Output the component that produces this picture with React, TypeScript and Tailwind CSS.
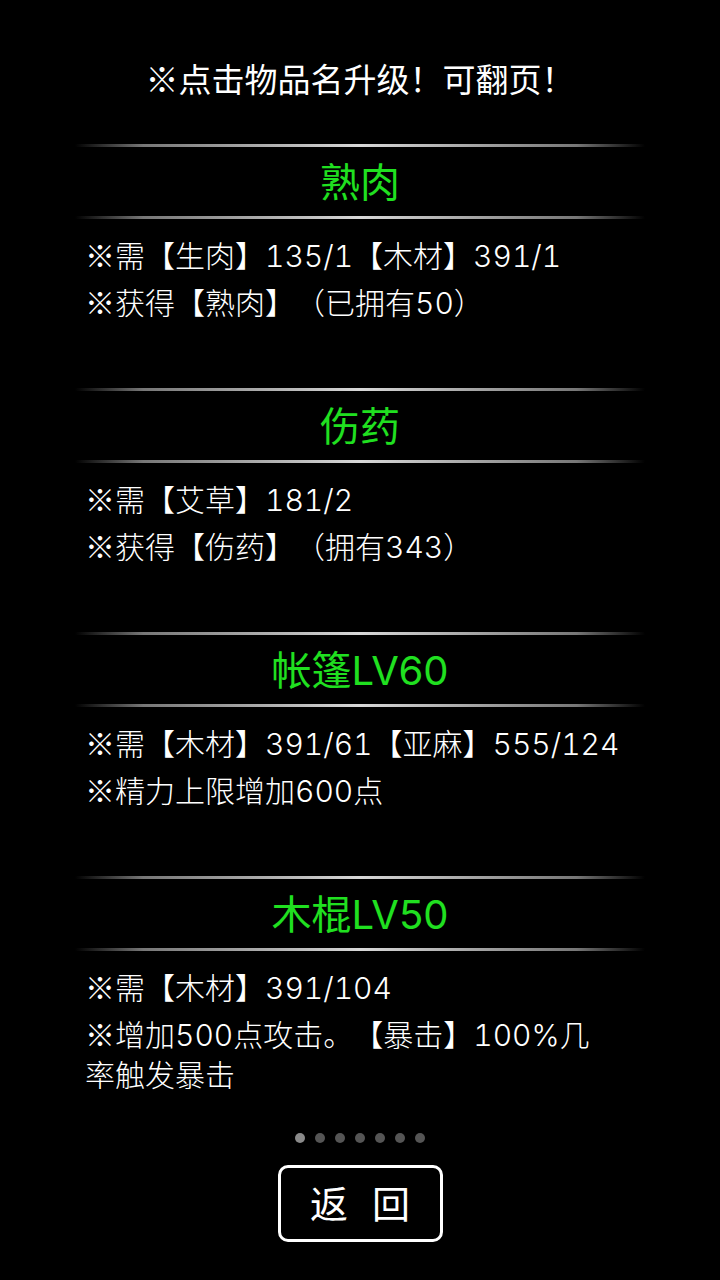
import React from 'react';

type Recipe = {
    title: string;
    lines: string[][];
};

// 每一行可以拆成多段（用于手动换行）
const recipes: Recipe[] = [
    {
        title: '熟肉',
        lines: [['※需【生肉】135/1【木材】391/1'], ['※获得【熟肉】（已拥有50）']],
    },
    {
        title: '伤药',
        lines: [['※需【艾草】181/2'], ['※获得【伤药】（拥有343）']],
    },
    {
        title: '帐篷LV60',
        lines: [['※需【木材】391/61【亚麻】555/124'], ['※精力上限增加600点']],
    },
    {
        title: '木棍LV50',
        lines: [['※需【木材】391/104'], ['※增加500点攻击。【暴击】100%几', '率触发暴击']],
    },
];

// ※ 用中文字体显示，Inter 里的 ※ 太小
const WithMark = ({ text }: { text: string }) => {
    const parts = text.split('※');
    return (
        <>
            {parts.map((p, i) => (
                <React.Fragment key={i}>
                    {i > 0 && <span className="font-['Noto_Sans_CJK_SC'] font-normal">※</span>}
                    {p}
                </React.Fragment>
            ))}
        </>
    );
};

// 分隔线：两端渐隐的灰白细线
const Divider = () => (
    <div className="h-[3px] w-full bg-[linear-gradient(to_right,transparent_0%,#777_12%,#d8d8d8_50%,#777_88%,transparent_100%)]" />
);

const RecipeCard = ({ recipe }: { recipe: Recipe }) => (
    <div className="h-[244px] mx-[75px]">
        <Divider />
        <div className="h-[69px] pt-[3px] flex items-center justify-center">
            <span className="text-[40px] leading-none text-[#20e020] cursor-pointer">{recipe.title}</span>
        </div>
        <Divider />
        <div className="pt-[15px] pl-[10px] flex flex-col gap-[5px] text-[30px] leading-[40px] text-white font-light tabular-nums">
            {recipe.lines.map((line, i) => (
                <div key={i}>
                    {line.map((seg, j) => (
                        <React.Fragment key={j}>
                            {j > 0 && <br />}
                            <WithMark text={seg} />
                        </React.Fragment>
                    ))}
                </div>
            ))}
        </div>
    </div>
);

export default function App() {
    return (
        <div
            className="w-[720px] h-[1280px] bg-black flex flex-col overflow-hidden [text-spacing-trim:space-all]"
            style={{ fontFamily: 'Inter, "Noto Sans CJK SC", sans-serif' }}
        >
            {/* 提示 */}
            <div className="h-[144px] pt-[58px] text-center text-[33px] leading-[40px] text-white">
                <WithMark text="※点击物品名升级！可翻页！" />
            </div>

            {/* 列表 */}
            {recipes.map((r) => (
                <RecipeCard key={r.title} recipe={r} />
            ))}

            {/* 分页点 */}
            <div className="mt-[13px] flex justify-center gap-[10px]">
                {[0, 1, 2, 3, 4, 5, 6].map((i) => (
                    <span
                        key={i}
                        className={`w-[10px] h-[10px] rounded-full ${i === 0 ? 'bg-[#8a8a8a]' : 'bg-[#555555]'}`}
                    />
                ))}
            </div>

            {/* 返回按钮 */}
            <div className="mt-[22px] flex justify-center">
                <button className="w-[165px] h-[77px] border-[3px] border-white rounded-[10px] text-white text-[38px] leading-none flex items-center justify-center gap-[24px]">
                    <span>返</span>
                    <span>回</span>
                </button>
            </div>
        </div>
    );
}
